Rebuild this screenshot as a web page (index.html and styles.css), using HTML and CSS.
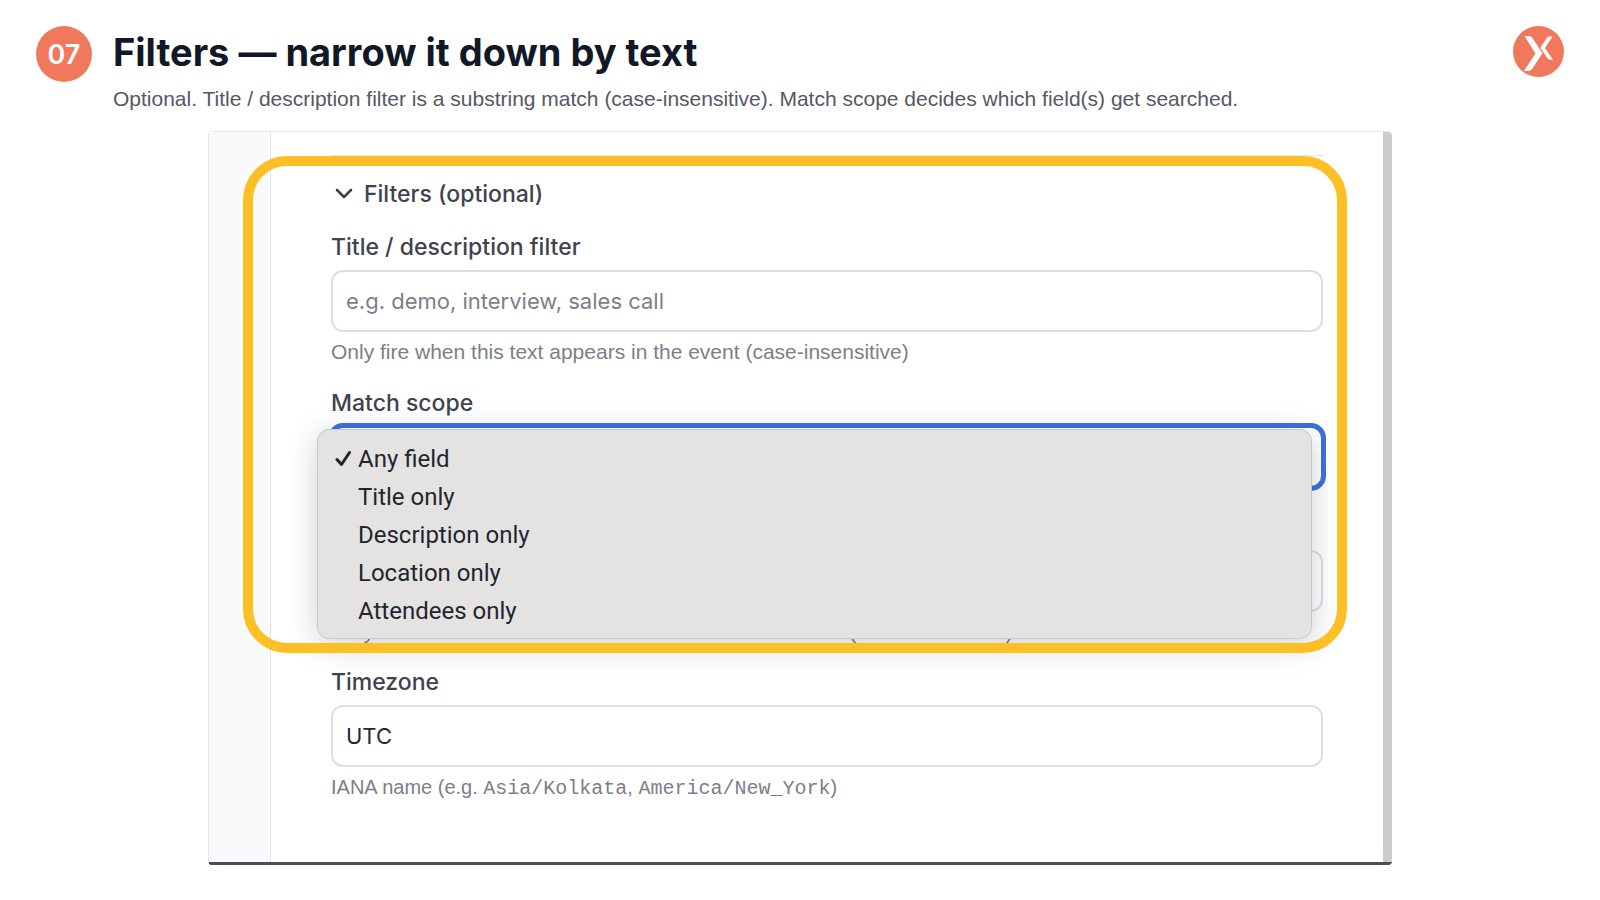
FILE: index.html
```
<!DOCTYPE html>
<html lang="en">
<head>
<meta charset="utf-8">
<title>Filters — narrow it down by text</title>
<link rel="stylesheet" href="styles.css">
</head>
<body>
<header class="header">
  <span class="step">07</span>
  <div class="heading">
    <h1 class="title">Filters — narrow it down by text</h1>
    <p class="subtitle">Optional. Title / description filter is a substring match (case-insensitive). Match scope decides which field(s) get searched.</p>
  </div>
  <svg class="logo" viewBox="0 0 51 51" role="img" aria-label="Logo">
    <circle cx="25.5" cy="25.5" r="25.5" fill="#f0785c"/>
    <path d="M11.500 10h4.500q2 0 3.200 1.800L29.500 27.200 19.500 42.500q-1.500 2.300-4.200 2.500H10.800L22.500 27.500z" fill="#fff"/>
    <path d="M39.500 10.500h-3.200q-1.500 0-2.500 1.400L27.300 21.800l7 10.300q1.200 1.700 3 1.700h2.700L32 22z" fill="#fff"/>
  </svg>
</header>
<main class="stage">
  <div class="panel">
    <aside class="rail"></aside>
    <form class="form">
      <section class="group">
        <button class="toggle" type="button" aria-expanded="true">
          <svg class="chevron" viewBox="0 0 18 12" aria-hidden="true"><path d="M2 2l7 7 7-7" fill="none" stroke="currentColor" stroke-width="2.600" stroke-linecap="round" stroke-linejoin="round"/></svg>
          Filters (optional)
        </button>
        <div class="field">
          <label class="label" for="text">Title / description filter</label>
          <input class="control" id="text" type="text" placeholder="e.g. demo, interview, sales call">
          <p class="help">Only fire when this text appears in the event (case-insensitive)</p>
        </div>
        <div class="field">
          <label class="label" for="scope">Match scope</label>
          <select class="control control-open" id="scope">
            <option>Any field</option>
            <option>Title only</option>
            <option>Description only</option>
            <option>Location only</option>
            <option>Attendees only</option>
          </select>
          <ul class="menu" role="listbox" aria-label="Match scope">
            <li class="option" role="option" aria-selected="true"><svg class="check" viewBox="0 0 18 18" aria-hidden="true"><path d="M2 9.500l4.500 5L14.500 2.500" fill="none" stroke="currentColor" stroke-width="3" stroke-linecap="round" stroke-linejoin="round"/></svg>Any field</li>
            <li class="option" role="option">Title only</li>
            <li class="option" role="option">Description only</li>
            <li class="option" role="option">Location only</li>
            <li class="option" role="option">Attendees only</li>
          </ul>
        </div>
        <div class="field field-covered">
          <input class="control" type="text" aria-label="Attendee filter">
          <p class="help">Only fire when an attendee email or name contains this (case-insensitive)</p>
        </div>
      </section>
      <div class="field">
        <label class="label" for="tz">Timezone</label>
        <input class="control" id="tz" type="text" value="UTC">
        <p class="help help-code">IANA name (e.g. <code class="code">Asia/Kolkata</code>, <code class="code">America/New_York</code>)</p>
      </div>
    </form>
    <div class="track"></div>
  </div>
</main>
</body>
</html>
```
FILE: styles.css
```
* {
  box-sizing: border-box;
}

body {
  margin: 0;
  background: #fff;
  color: #3f434d;
  font-family: Inter, sans-serif;
}

.header {
  display: flex;
  align-items: flex-start;
  gap: 21px;
  padding: 26px 36px 18px;
}

.step {
  display: flex;
  flex: none;
  align-items: center;
  justify-content: center;
  width: 56px;
  height: 56px;
  border-radius: 50%;
  background: #f0785c;
  color: #fff;
  font-size: 27px;
  font-weight: 600;
}

.heading {
  flex: 1;
}

.title {
  margin: 0 0 7px;
  color: #111827;
  font-size: 38px;
  font-weight: 700;
  line-height: 52px;
}

.subtitle {
  margin: 0;
  color: #555963;
  font-family: "Liberation Sans", sans-serif;
  font-size: 21px;
  line-height: 28px;
}

.logo {
  flex: none;
  width: 51px;
  height: 51px;
}

.stage {
  padding: 0 13%;
}

.panel {
  display: flex;
  border-top: 1px solid #e8eaec;
  border-bottom: 3px solid #4a4e57;
  border-left: 1px solid #e5e7eb;
  border-radius: 4px;
}

.rail {
  flex: none;
  width: 62px;
  border-right: 1px solid #e2e5e9;
  background: #f9fafb;
}

.track {
  flex: none;
  width: 9px;
  border-radius: 0 4px 4px 0;
  background: #cacbcd;
}

.form {
  display: flex;
  flex: 1;
  flex-direction: column;
  gap: 22px;
  padding: 23px 60px 60px;
}

.group {
  position: relative;
  display: flex;
  flex-direction: column;
  gap: 23px;
  padding-top: 23px;
  border-top: 1px solid #e5e7eb;
}

.group::after {
  content: "";
  position: absolute;
  inset: 0 -24px -8px -88px;
  z-index: 2;
  border: 10px solid #fcbf24;
  border-radius: 44px;
  pointer-events: none;
}

.toggle {
  display: flex;
  align-items: center;
  align-self: flex-start;
  gap: 11px;
  padding: 0 0 0 4px;
  border: 0;
  background: none;
  color: #3f434d;
  font: 500 23px/30px Inter, sans-serif;
}

.chevron {
  width: 18px;
  height: 12px;
}

.field {
  position: relative;
  display: flex;
  flex-direction: column;
}

.field-covered {
  padding-top: 39px;
}

.label {
  margin-bottom: 8px;
  font-size: 23px;
  font-weight: 500;
  line-height: 30px;
}

.control {
  width: 100%;
  height: 62px;
  padding: 0 13px;
  border: 2px solid #dcdfe4;
  border-radius: 12px;
  background: #fff;
  color: #1f2937;
  font: 400 22px Inter, sans-serif;
}

.control::placeholder {
  color: #7b7f88;
}

.control-open {
  appearance: none;
  border-color: #4070dc;
  box-shadow: 0 0 0 3px #4070dc;
}

.help {
  margin: 7px 0 0;
  color: #7b7f88;
  font-family: "Liberation Sans", sans-serif;
  font-size: 21px;
  line-height: 26px;
}

.help-code {
  font-size: 20px;
}

.code {
  font-family: "Liberation Mono", monospace;
  font-size: 20px;
}

.menu {
  position: absolute;
  top: 41px;
  right: 11px;
  left: -14px;
  z-index: 1;
  margin: 0;
  padding: 10px 0 8px 17px;
  border: 1px solid #c9cacc;
  border-radius: 12px;
  background: #e4e3e1;
  box-shadow: 0 6px 30px rgba(30, 41, 59, 0.22);
  list-style: none;
}

.option {
  display: flex;
  align-items: center;
  padding-left: 23px;
  color: #1f2630;
  font-family: Roboto, sans-serif;
  font-size: 24px;
  line-height: 38px;
}

.check {
  width: 18px;
  height: 18px;
  margin-right: 5px;
  margin-left: -23px;
}
```
